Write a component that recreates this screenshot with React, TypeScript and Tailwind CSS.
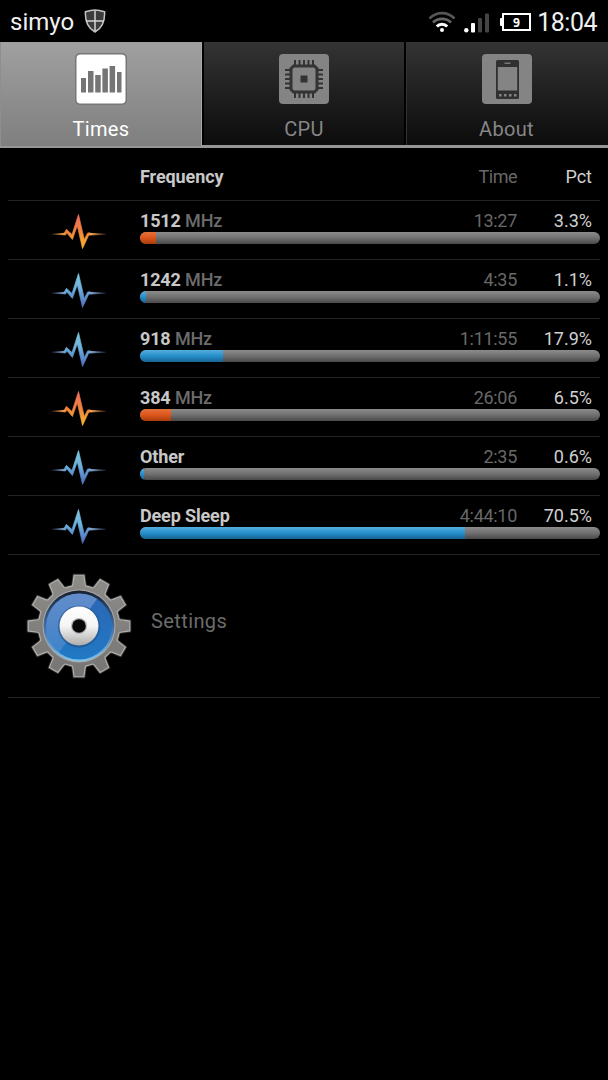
type Row = {
  label: string;
  unit?: string;
  time: string;
  pct: number;
  hot?: boolean;
};

const rows: Row[] = [
  { label: "1512", unit: "MHz", time: "13:27", pct: 3.3, hot: true },
  { label: "1242", unit: "MHz", time: "4:35", pct: 1.1 },
  { label: "918", unit: "MHz", time: "1:11:55", pct: 17.9 },
  { label: "384", unit: "MHz", time: "26:06", pct: 6.5, hot: true },
  { label: "Other", time: "2:35", pct: 0.6 },
  { label: "Deep Sleep", time: "4:44:10", pct: 70.5 },
];

function StatusBar() {
  return (
    <header className="flex h-[42px] items-center pl-[10px] pr-[11px] text-[#f0f0f0]">
      <span className="text-[24px] leading-[42px] pt-[2px]">simyo</span>
      <svg className="ml-[10px]" width="22" height="24" viewBox="0 0 22 24">
        <path d="M11 1C14.500 1 17.500 1.800 20.600 2.800C21 12 18.500 19 11 23C3.500 19 1 12 1.400 2.800C4.500 1.800 7.500 1 11 1Z" fill="#3c3c3c" stroke="#c4c4c4" strokeWidth="1.500" />
        <path d="M11 1.500V22M2 12H20" stroke="#d4d4d4" strokeWidth="1.500" />
      </svg>
      <svg className="ml-auto mt-[2px]" width="28" height="22" viewBox="0 0 28 22" fill="none">
        <path d="M1.500 7.500C8.500 0.300 19.500 0.300 26.500 7.500" stroke="#555" strokeWidth="2.600" />
        <path d="M5 11.500C10 6.600 18 6.600 23 11.500" stroke="#666" strokeWidth="2.600" />
        <path d="M8.800 15.500C11.500 12.500 16.500 12.500 19.200 15.500" stroke="#fff" strokeWidth="3" />
        <circle cx="14" cy="19" r="2" fill="#fff" />
      </svg>
      <svg className="ml-[8px] mt-[3px]" width="26" height="20" viewBox="0 0 26 20">
        <circle cx="2.300" cy="17.200" r="2.200" fill="#fff" />
        <rect x="7" y="10" width="4" height="9.500" rx="1" fill="#fff" />
        <rect x="14" y="5" width="4" height="14.500" rx="1" fill="#444" />
        <rect x="21" y="0.500" width="4" height="19" rx="1" fill="#444" />
      </svg>
      <svg className="ml-[10px] mt-[2px]" width="32" height="20" viewBox="0 0 32 20">
        <rect x="0" y="6" width="3" height="8" rx="1" fill="#fff" />
        <rect x="3" y="2" width="27" height="16" fill="none" stroke="#fff" strokeWidth="2" />
        <text x="16.500" y="14.500" textAnchor="middle" fill="#fff" fontSize="12.500" fontWeight="700" fontFamily="DejaVu Sans Mono, monospace">9</text>
      </svg>
      <span className="ml-[5px] text-[25px] leading-[42px] tracking-[-0.500px] pt-[4px]">18:04</span>
    </header>
  );
}

function ChartIcon() {
  return (
    <svg width="54" height="54" viewBox="0 0 54 54">
      <rect x="1" y="1" width="52" height="52" rx="5" fill="#777" />
      <rect x="2.500" y="2.500" width="49" height="49" rx="4" fill="#fff" />
      <path d="M7 26h5v14.500h-5zM14 19h5.500v21.500h-5.500zM21.200 23h5.500v17.500h-5.500zM28.400 16.500h5.500v24h-5.500zM35.600 14h5.500v26.500h-5.500zM43 20h4.500v20.500h-4.500z" fill="#757575" />
    </svg>
  );
}

function CpuIcon() {
  return (
    <svg width="54" height="54" viewBox="0 0 54 54">
      <rect x="2" y="2" width="50" height="50" rx="4" fill="#848484" />
      <path
        d="M18 8v38M22.500 8v38M27 8v38M31.500 8v38M36 8v38M8 18h38M8 22.500h38M8 27h38M8 31.500h38M8 36h38"
        stroke="#333"
        strokeWidth="2"
      />
      <path d="M16 12.500h22l3.500 3.500v22l-3.500 3.500h-22l-3.500-3.500v-22z" fill="#333" />
      <path d="M17 15.500h20l1.500 1.500v20l-1.500 1.500h-20l-1.500-1.500v-20z" fill="#848484" />
      <rect x="23.500" y="23.500" width="7" height="7" fill="#333" />
    </svg>
  );
}

function PhoneIcon() {
  return (
    <svg width="54" height="54" viewBox="0 0 54 54">
      <rect x="2" y="2" width="50" height="50" rx="4" fill="#848484" />
      <rect x="16" y="8" width="23" height="39" rx="1.500" fill="#303030" />
      <rect x="24.500" y="10.500" width="6" height="1.500" fill="#777" />
      <rect x="17.800" y="15" width="19.400" height="23.500" fill="#848484" />
      <path d="M19 42h2.500v2.500h-2.500zM24 42h2.500v2.500h-2.500zM29 42h2.500v2.500h-2.500zM34 42h2.500v2.500h-2.500z" fill="#848484" />
    </svg>
  );
}

function Tabs() {
  return (
    <nav className="grid h-[106px] grid-cols-[202px_204px_202px] border-b-[3px] border-[#969696] text-[20px] tracking-[0.300px]">
      <div className="-mb-[1px] flex flex-col items-center border-x border-[#8e8e8e] border-r-[#a8a8a8] bg-linear-to-b from-[#a0a0a0] to-[#7f7f7f] pt-[10px] text-white">
        <ChartIcon />
        <span className="mt-[8px] leading-[30px]">Times</span>
      </div>
      <div className="flex flex-col items-center border-x-2 border-black bg-linear-to-b from-[#343434] to-[#0c0c0c] pt-[10px] text-[#868686]">
        <CpuIcon />
        <span className="mt-[8px] leading-[30px]">CPU</span>
      </div>
      <div className="flex flex-col items-center border-l border-[#333] bg-linear-to-b from-[#343434] to-[#0c0c0c] pr-[2px] pt-[10px] text-[#868686]">
        <PhoneIcon />
        <span className="mt-[8px] leading-[30px]">About</span>
      </div>
    </nav>
  );
}

function Pulse({ hot }: { hot?: boolean }) {
  const id = hot ? "pulse-hot" : "pulse-cool";
  return (
    <svg width="56" height="40" viewBox="0 0 56 40">
      <defs>
        <linearGradient id={id} gradientUnits="userSpaceOnUse" x1="0" y1="0" x2="0" y2="38">
          <stop offset="0.100" stopColor={hot ? "#f2715c" : "#7cc4dc"} />
          <stop offset="0.450" stopColor={hot ? "#f08040" : "#6cb0dc"} />
          <stop offset="1" stopColor={hot ? "#f8bc2c" : "#4a62b8"} />
        </linearGradient>
        <linearGradient id={`${id}-tail`} gradientUnits="userSpaceOnUse" x1="0" y1="0" x2="56" y2="0">
          <stop offset="0" stopColor={hot ? "#ffa860" : "#84a8d8"} stopOpacity="0.100" />
          <stop offset="0.250" stopColor={hot ? "#ffa850" : "#84a8d8"} />
          <stop offset="0.700" stopColor={hot ? "#ffa850" : "#84a8d8"} />
          <stop offset="1" stopColor={hot ? "#ffa860" : "#84a8d8"} stopOpacity="0.100" />
        </linearGradient>
      </defs>
      <path d="M0.500 20.800L14 19.800V22.200L0.500 21.700ZM38 19.800L55 20.800V21.700L37 22.400Z" fill={`url(#${id}-tail)`} />
      <path
        d="M13.300 19.900L15.400 16.300L21 21.500L27.500 1.500L33.300 26.500L36.700 19.900L39 19.900L37.600 22.400L31.500 35.500L26.300 12.800L21.400 26.500L15.700 19.800L14.500 22.200Z"
        fill={`url(#${id})`}
        stroke={`url(#${id})`}
        strokeWidth="0.700"
      />
    </svg>
  );
}

function FrequencyRow({ row }: { row: Row }) {
  return (
    <div className="flex h-[59px] border-b border-[#242424]">
      <div className="w-[132px] shrink-0 pl-[43px] pt-[12px]">
        <Pulse hot={row.hot} />
      </div>
      <div className="flex-1 pt-[8px]">
        <div className="flex pr-[8px] leading-[24px]">
          <span className="font-bold tracking-[-0.150px] text-[#c8c8c8]">
            {row.label} {row.unit && <span className="font-medium text-[#6c6c6c]">{row.unit}</span>}
          </span>
          <span className="ml-auto tracking-[-0.300px] text-[#686868]">{row.time}</span>
          <span className="w-[75px] text-right text-[#d0d0d0]">{row.pct.toFixed(1)}%</span>
        </div>
        <div className="-mt-[1px] h-[12px] overflow-hidden rounded-full bg-linear-to-b from-[#8c8c8c] via-[#707070] to-[#494949]">
          <div
            className={
              row.hot
                ? "h-full bg-linear-to-b from-[#e57138] via-[#dc551b] to-[#a83c0c]"
                : "h-full bg-linear-to-b from-[#55aedc] via-[#248fcc] to-[#186491]"
            }
            style={{ width: `calc(${row.pct}% + 1px)` }}
          />
        </div>
      </div>
    </div>
  );
}

// twelve teeth around the rim, in the icon's own centre-based coordinates
const gearPath =
  Array.from({ length: 12 }, (_, i) => {
    const point = (radius: number, deg: number) => {
      const a = ((i * 30 + deg) * Math.PI) / 180;
      return `${(radius * Math.cos(a)).toFixed(2)} ${(radius * Math.sin(a)).toFixed(2)}`;
    };
    return `${i === 0 ? "M" : "L"}${point(40.5, -10)}L${point(42, -8.5)}L${point(51, -5.5)}L${point(51, 5.5)}L${point(42, 8.5)}L${point(40.5, 10)}A40.5 40.5 0 0 1 ${point(40.5, 20)}`;
  }).join("") + "Z";

function GearIcon() {
  return (
    <svg width="108" height="108" viewBox="-54 -54 108 108">
      <defs>
        <linearGradient id="gear-body" x1="0" y1="0" x2="0" y2="1">
          <stop offset="0" stopColor="#8e8c89" />
          <stop offset="1" stopColor="#777573" />
        </linearGradient>
        <linearGradient id="gear-blue" x1="0" y1="0" x2="0" y2="1">
          <stop offset="0" stopColor="#2b66b4" />
          <stop offset="1" stopColor="#2179c4" />
        </linearGradient>
        <linearGradient id="gear-sheen" x1="0" y1="0" x2="0" y2="1">
          <stop offset="0" stopColor="#91adde" stopOpacity="0.550" />
          <stop offset="1" stopColor="#91adde" stopOpacity="0.250" />
        </linearGradient>
        <linearGradient id="gear-hub" x1="0" y1="0" x2="0" y2="1">
          <stop offset="0" stopColor="#fff" />
          <stop offset="0.500" stopColor="#f5f5f5" />
          <stop offset="1" stopColor="#adadad" />
        </linearGradient>
        <linearGradient id="gear-ring" x1="0" y1="0" x2="0" y2="1">
          <stop offset="0" stopColor="#17202d" />
          <stop offset="0.500" stopColor="#3f6ca4" />
          <stop offset="1" stopColor="#80c6ef" />
        </linearGradient>
      </defs>
      <path d={gearPath} fill="url(#gear-body)" stroke="#333" strokeWidth="3" />
      <path d={gearPath} fill="url(#gear-body)" stroke="#b2b0ad" strokeWidth="1.200" />
      <circle r="36.500" fill="#aaa8a5" />
      <circle r="35.500" fill="url(#gear-ring)" />
      <circle cy="0.500" r="33" fill="url(#gear-blue)" />
      <path d="M-20 26.700A33 33 0 0 1 18 -27.200Z" fill="url(#gear-sheen)" />
      <circle cy="0.500" r="21" fill="#204c83" fillOpacity="0.600" />
      <circle r="19.500" fill="url(#gear-hub)" />
      <circle r="8" fill="#b5b5b5" />
      <circle r="6.800" fill="#080808" />
    </svg>
  );
}

export default function App() {
  return (
    <div className="h-[1080px] w-[608px] overflow-hidden bg-black font-['Roboto',sans-serif]">
      <StatusBar />
      <Tabs />
      <main className="px-[8px] text-[18px]">
        <div className="flex h-[53px] border-b border-[#242424] pl-[132px] pr-[8px] pt-[17px] leading-[24px]">
          <span className="font-bold tracking-[-0.100px] text-[#c8c8c8]">Frequency</span>
          <span className="ml-auto tracking-[-0.500px] text-[#686868]">Time</span>
          <span className="w-[75px] text-right text-[#d0d0d0]">Pct</span>
        </div>
        {rows.map((row) => (
          <FrequencyRow key={row.label} row={row} />
        ))}
        <div className="flex h-[143px] border-b border-[#242424] pl-[17px] pt-[17px]">
          <GearIcon />
          <span className="ml-[18px] mt-[34px] text-[20px] leading-[30px] tracking-[0.400px] text-[#6c6c6c]">Settings</span>
        </div>
      </main>
    </div>
  );
}
